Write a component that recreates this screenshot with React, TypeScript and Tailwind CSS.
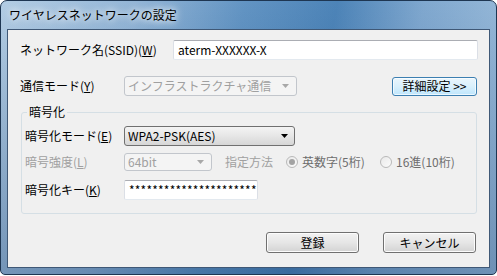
import React from 'react';

const font = "font-['Noto_Sans_CJK_JP','Liberation_Sans',sans-serif]";

function Arrow({ disabled }: { disabled?: boolean }) {
  return (
    <svg width="7" height="4" viewBox="0 0 7 4" className="shrink-0">
      <path d="M0 0H7L3.5 4Z" fill={disabled ? '#a8a8a8' : '#000'} />
    </svg>
  );
}

function Radio({ checked }: { checked?: boolean }) {
  return (
    <span className="flex h-[12px] w-[12px] shrink-0 items-center justify-center rounded-full border border-[#b9b9b9] bg-gradient-to-br from-[#e9e9e9] to-[#fbfbfb]">
      {checked ? <span className="h-[6px] w-[6px] rounded-full bg-[#a3a3a3]" /> : null}
    </span>
  );
}

function TextBox({ value, className }: { value: string; className: string }) {
  return (
    <div
      className={`flex items-center rounded-[2px] border border-[#abadb3] border-x-[#dbdfe6] border-b-[#e3e9ef] bg-white pl-[4px] text-[12px] leading-[16px] ${className}`}
    >
      {value}
    </div>
  );
}

function Combo({ value, disabled, className }: { value: string; disabled?: boolean; className: string }) {
  return (
    <div
      className={
        disabled
          ? `flex items-center justify-between rounded-[3px] border border-[#c2c6cc] bg-[#f4f4f4] pl-[3px] pr-[7px] text-[12px] leading-[16px] text-[#a0a0a0] ${className}`
          : `flex items-center justify-between rounded-[3px] border border-[#707070] bg-gradient-to-b from-[#f4f4f4] via-[#e6e6e6] to-[#d6d6d6] pl-[3px] pr-[6px] text-[12px] leading-[16px] text-black ${className}`
      }
    >
      <span>{value}</span>
      <Arrow disabled={disabled} />
    </div>
  );
}

function Button({ children, focused, className }: { children: React.ReactNode; focused?: boolean; className: string }) {
  return (
    <div
      className={
        focused
          ? `flex items-center justify-center rounded-[3px] border border-[#3c7fb1] bg-gradient-to-b from-[#eaf6fd] via-[#d9f0fc] to-[#bee6fd] text-[12px] leading-[16px] shadow-[inset_0_0_0_1px_#ffffffb0] ${className}`
          : `flex items-center justify-center rounded-[3px] border border-[#707070] bg-gradient-to-b from-[#f2f2f2] via-[#e6e6e6] to-[#d3d3d3] text-[12px] leading-[16px] shadow-[inset_0_0_0_1px_#fcfcfc] ${className}`
      }
    >
      {children}
    </div>
  );
}

export default function App() {
  return (
    <div className={`h-[276px] w-[497px] bg-white ${font}`}>
      <div className="flex h-[275px] w-[497px] flex-col rounded-t-[7px] rounded-b-[5px] border border-[#1e3652] bg-[linear-gradient(to_bottom,rgba(20,60,110,0)_0%,rgba(20,60,110,0.35)_100%),linear-gradient(100deg,#b3cde4_0%,#93b5d6_25%,#6294c3_45%,#4d84b8_62%,#80a8cf_78%,#9fbfdc_100%)]">
        <div className="flex h-[28px] shrink-0 items-center pl-[8px] text-[12px] leading-[16px] text-black [text-shadow:0_0_6px_#ffffff,0_0_10px_#ffffff]">
          ワイヤレスネットワークの設定
        </div>
        <div className="mx-[6px] mb-[6px] flex flex-1 flex-col border border-[#3f5876] bg-[#f0f0f0] text-black">
          <div className="pl-[12px] pr-[11px]">
            {/* SSID */}
            <div className="mt-[10px] flex h-[20px] items-center">
              <span className="w-[153px] text-[12px] leading-[16px]">
                ネットワーク名(SSID)(<u>W</u>)
              </span>
              <TextBox value="aterm-XXXXXX-X" className="h-[20px] w-[305px]" />
            </div>

            {/* mode */}
            <div className="mt-[16px] flex h-[20px] items-center">
              <span className="w-[104px] text-[12px] leading-[16px]">
                通信モード(<u>Y</u>)
              </span>
              <Combo value="インフラストラクチャ通信" disabled className="h-[20px] w-[173px]" />
              <Button focused className="ml-[95px] h-[19px] w-[85px]">
                詳細設定 &gt;&gt;
              </Button>
            </div>

            {/* encryption group */}
            <div className="relative ml-[1px] mt-[16px] h-[102px] w-[456px] rounded-[3px] border border-[#d5dfe5] pl-[3px]">
              <span className="absolute -top-[9px] left-[5px] bg-[#f0f0f0] px-[2px] text-[12px] leading-[16px]">
                暗号化
              </span>
              <div className="mt-[13px] flex h-[20px] items-center">
                <span className="w-[99px] text-[12px] leading-[16px]">
                  暗号化モード(<u>E</u>)
                </span>
                <Combo value="WPA2-PSK(AES)" className="h-[20px] w-[171px]" />
              </div>
              <div className="mt-[7px] flex h-[18px] items-center text-[12px] leading-[16px]">
                <span className="w-[99px] text-[#a0a0a0]">
                  暗号強度(<u>L</u>)
                </span>
                <Combo value="64bit" disabled className="h-[18px] w-[88px]" />
                <span className="ml-[13px] w-[61px] text-[#a0a0a0]">指定方法</span>
                <span className="flex w-[94px] items-center gap-[4px] text-[#6d6d6d]">
                  <Radio checked />
                  英数字(5桁)
                </span>
                <span className="flex items-center gap-[4px] text-[#6d6d6d]">
                  <Radio />
                  16進(10桁)
                </span>
              </div>
              <div className="mt-[9px] flex h-[20px] items-center">
                <span className="w-[99px] text-[12px] leading-[16px]">
                  暗号化キー(<u>K</u>)
                </span>
                <TextBox value="**********************" className="h-[20px] w-[134px] whitespace-nowrap tracking-[0.2px]" />
              </div>
            </div>
          </div>

          {/* buttons */}
          <div className="mt-[18px] flex justify-end gap-[24px] pr-[13px]">
            <Button className="h-[21px] w-[93px]">登録</Button>
            <Button className="h-[21px] w-[93px]">キャンセル</Button>
          </div>
        </div>
      </div>
    </div>
  );
}
